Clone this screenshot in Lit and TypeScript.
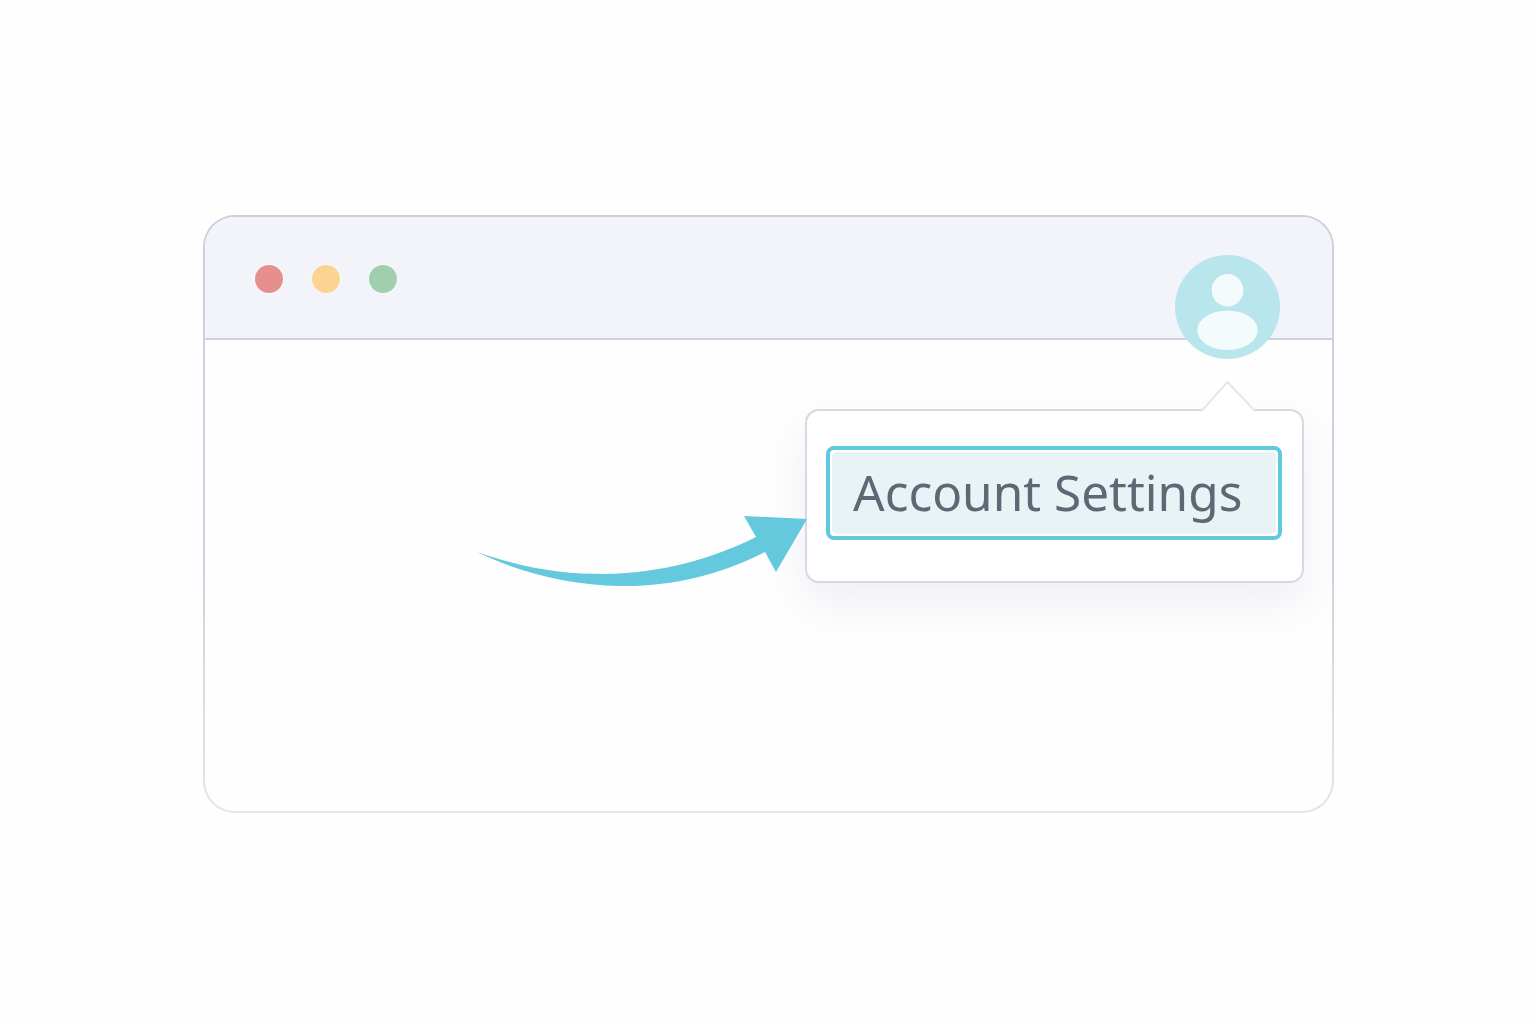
import { LitElement, css, html } from "lit";
import { customElement } from "lit/decorators.js";

@customElement("app-root")
export class AppRoot extends LitElement {
  static styles = css`
    :host {
      display: block;
      min-height: 1024px;
      box-sizing: border-box;
      padding: 215px 0 0 203px;
      background: #fefefe;
      font-family: "Noto Sans", "Open Sans", sans-serif;
    }

    .window {
      position: relative;
      box-sizing: border-box;
      width: 1131px;
      height: 598px;
      border: 2px solid transparent;
      border-radius: 32px;
      background: linear-gradient(#fefefe, #fefefe) padding-box,
        linear-gradient(#cdcfdf 0%, #d0d2e1 60%, #e4e5ec 100%) border-box;
    }

    .titlebar {
      box-sizing: border-box;
      height: 123px;
      display: flex;
      gap: 29px;
      padding: 48px 0 0 50px;
      background: #f3f4f9;
      border-bottom: 2px solid #cfd1e0;
      border-radius: 30px 30px 0 0;
    }

    .dot {
      width: 28px;
      height: 28px;
      border-radius: 50%;
      box-shadow: 0 0 0 1px rgba(255, 255, 255, 0.5);
    }
    .red { background: #e68f8f; }
    .yellow { background: #fdd391; }
    .green { background: #a1ceae; }

    .avatar {
      position: absolute;
      left: 970px;
      top: 38px;
      width: 105px;
      height: 104px;
    }

    .menu {
      position: absolute;
      left: 600px;
      top: 192px;
      box-sizing: border-box;
      width: 499px;
      height: 174px;
      padding: 35px 20px 0 19px;
      background: #fff;
      border: 2px solid #d7d8e4;
      border-radius: 14px;
      box-shadow: 0 20px 44px rgba(120, 130, 175, 0.12);
    }

    .caret {
      position: absolute;
      left: 393px;
      top: -31px;
      width: 60px;
      height: 33px;
    }

    .item {
      box-sizing: border-box;
      height: 94px;
      padding: 2px;
      background: #fff;
      border: 4px solid #62c9dd;
      border-radius: 8px;
    }

    .label {
      box-sizing: border-box;
      height: 100%;
      display: flex;
      align-items: center;
      padding: 0 0 1px 21px;
      background: #e8f3f6;
      border-radius: 5px;
      color: #606674;
      font-size: 49.5px;
      line-height: 1;
      white-space: nowrap;
    }

    .arrow {
      position: absolute;
      left: 265px;
      top: 293px;
      width: 345px;
      height: 80px;
    }
  `;

  render() {
    return html`<div class="window">
      <div class="titlebar">
        <div class="dot red"></div>
        <div class="dot yellow"></div>
        <div class="dot green"></div>
      </div>

      <svg class="avatar" viewBox="0 0 105 104">
        <ellipse cx="52.5" cy="52" rx="52.5" ry="52" fill="#b9e5ed"></ellipse>
        <ellipse cx="52.5" cy="35.3" rx="15.8" ry="16.3" fill="#f3fbfc"></ellipse>
        <ellipse cx="52.5" cy="75.2" rx="30.2" ry="19.8" fill="#f3fbfc"></ellipse>
      </svg>

      <div class="menu">
        <svg class="caret" viewBox="0 0 60 33">
          <path d="M1.5 31 L27.5 2 L55 31 Z" fill="#fff"></path>
          <path d="M1.5 31 L27.5 2 L55 31" fill="none" stroke="#e6e7ee" stroke-width="2"></path>
        </svg>
        <div class="item"><div class="label">Account Settings</div></div>
      </div>

      <svg class="arrow" viewBox="470 510 345 80">
        <path
          d="M477 552 C530 570 565 574 605 574 C660 573 710 560 756 537 L744 516 L807 519 L776 572 L765 552 C720 575 670 587 620 586 C570 585 520 573 477 552 Z"
          fill="#64c9dd"
        ></path>
      </svg>
    </div>`;
  }
}
